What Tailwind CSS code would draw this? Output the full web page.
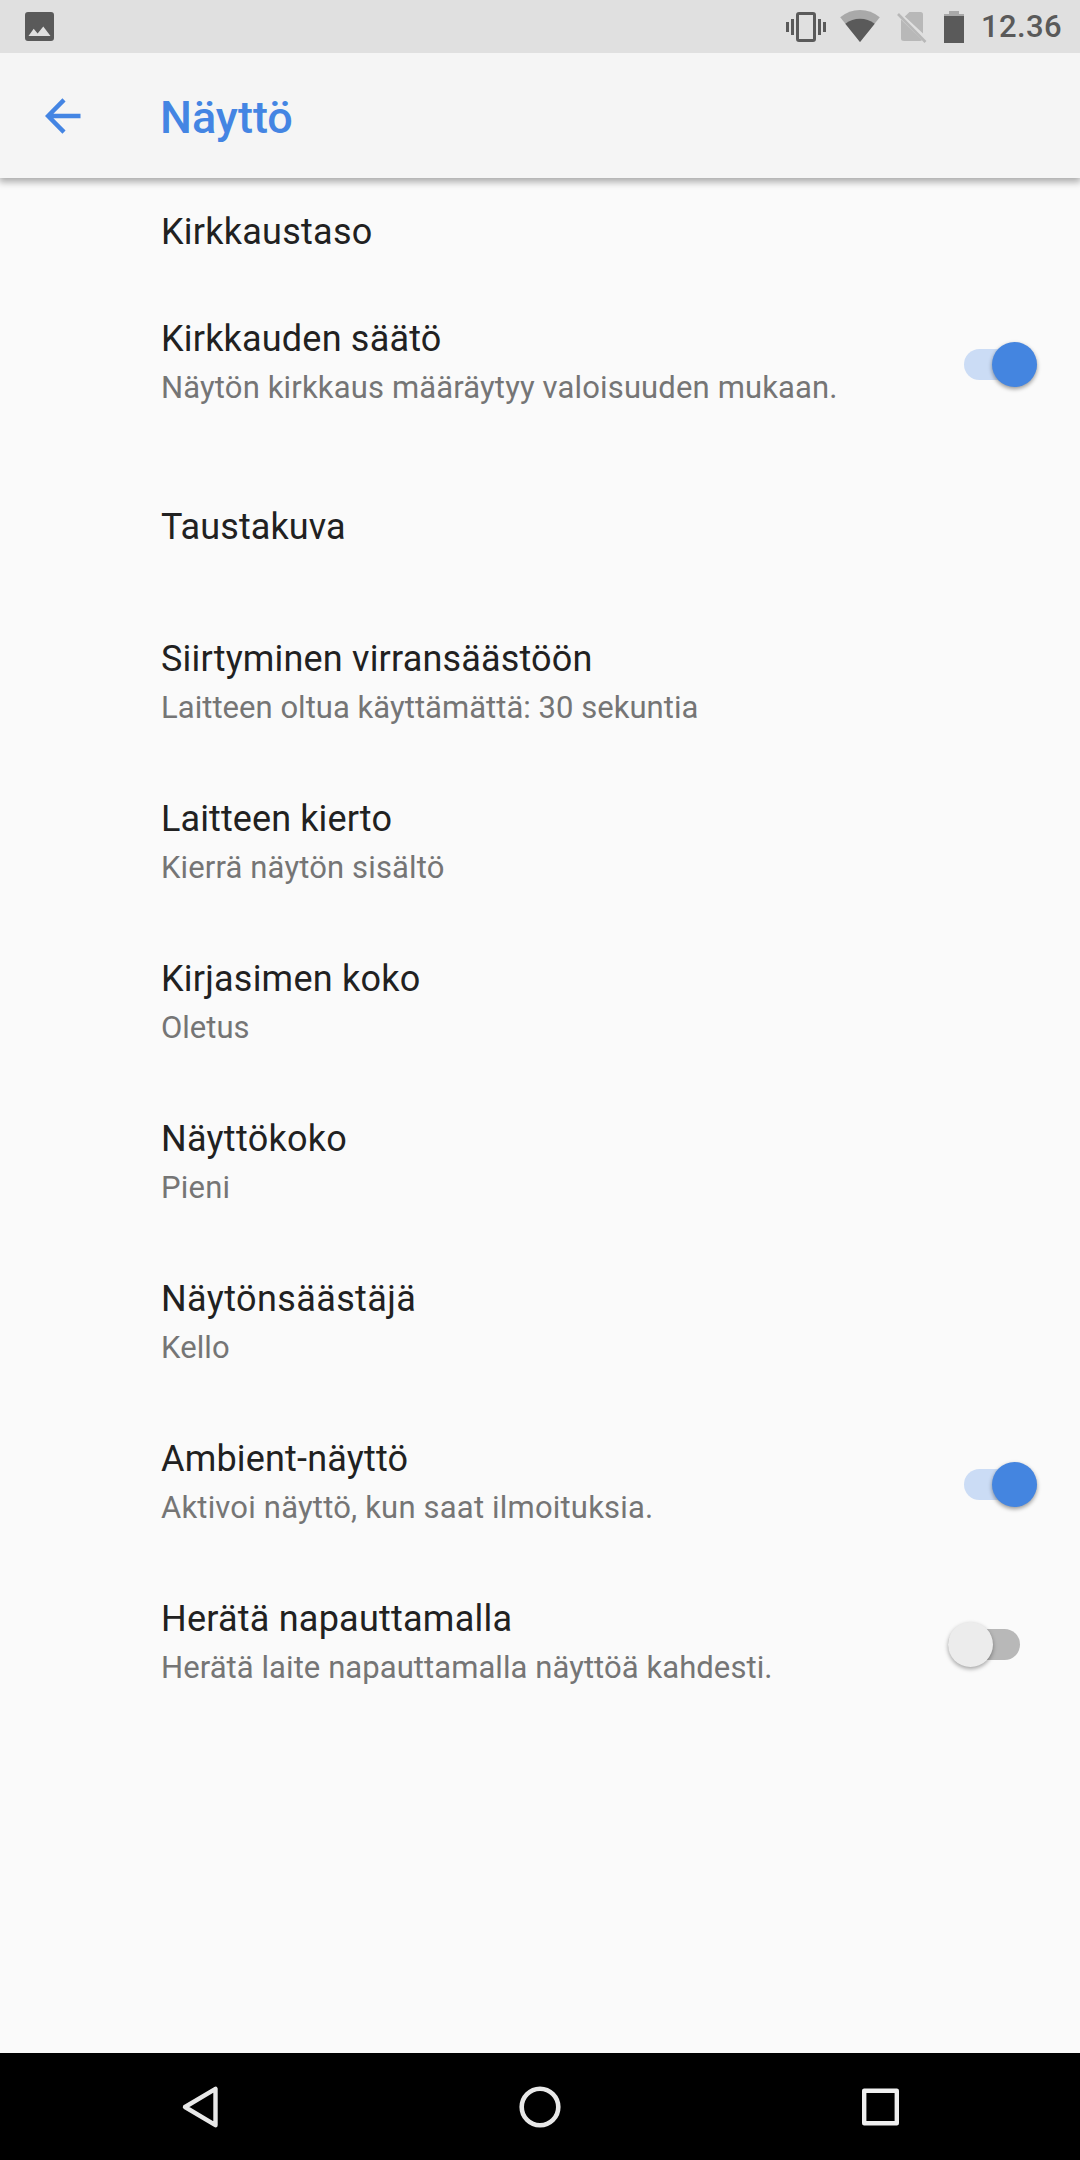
<!DOCTYPE html>
<html lang="fi">
<head>
    <meta charset="UTF-8">
    <meta name="viewport" content="width=device-width, initial-scale=1.0">
    <title>Näyttö</title>
    <script src="https://cdn.jsdelivr.net/npm/@tailwindcss/browser@4"></script>
</head>
<body class="bg-[#fafafa] font-['Roboto',sans-serif]">
    <div class="w-[1080px] h-[2160px] flex flex-col overflow-hidden">
        <!-- Status bar -->
        <div class="relative z-10 h-[53px] shrink-0 bg-[#e0e0e0] flex items-center justify-between pl-[25px] pr-[18px] text-[#5a5a5a]">
            <svg class="w-[29px] h-[29px]" viewBox="0 0 29 29">
                <path fill="currentColor" fill-rule="evenodd" d="M3 0H26Q29 0 29 3V26Q29 29 26 29H3Q0 29 0 26V3Q0 0 3 0ZM3.5 24H25.5L18.3 14.6L12.6 21.5L8.7 16.7Z"/>
            </svg>
            <div class="flex items-center">
                <svg class="w-[40px] h-[32px]" viewBox="786 11 40 32">
                    <path fill="currentColor" d="M786 22h3v10h-3zM791 19h3v16h-3zM818 19h3v16h-3zM823 22h3v10h-3z"/>
                    <rect x="797.5" y="13.5" width="17" height="27" rx="1.5" fill="none" stroke="currentColor" stroke-width="3"/>
                </svg>
                <svg class="w-[40px] h-[34px] ml-[14px]" viewBox="839.5 10 40 34">
                    <path fill="#a9a9a9" d="M859.5 42L839.7 17.3Q848.5 10 859.5 10T879.3 17.3Z"/>
                    <path fill="currentColor" d="M859.5 42L844.8 23.7Q851.5 18.8 859.5 18.8T874.2 23.7Z"/>
                </svg>
                <svg class="w-[30px] h-[34px] ml-[17px]" viewBox="897 10 30 34">
                    <path fill="#b8b8b8" d="M909.5 12H920.5Q923 12 923 14.5V33.5L904.8 16.6ZM901 19.5L922 40Q921.5 41 920 41H904Q901 41 901 38.5Z"/>
                    <path stroke="#b8b8b8" stroke-width="2.6" d="M898 14L925.5 42"/>
                </svg>
                <svg class="w-[20px] h-[34px] ml-[17px]" viewBox="944 9 20 34">
                    <path fill="#a9a9a9" d="M949 10h10v3h5v2.5h-20v-2.5h5z"/>
                    <path fill="currentColor" d="M944 15h20v27h-20z"/>
                </svg>
                <span class="ml-[17px] pt-px text-[31px] leading-[52px] font-medium tracking-[0.4px]">12.36</span>
            </div>
        </div>

        <!-- App bar -->
        <header class="relative h-[125px] shrink-0 bg-[#f5f5f5] flex items-center pl-[45px] text-[#4485e3] shadow-[0_3px_7px_1px_rgba(0,0,0,0.32)]">
            <svg class="w-[36px] h-[36px]" viewBox="0 0 36 36" fill="none" stroke="currentColor" stroke-width="4.4">
                <path d="M35.5 18H4M19 1.9L3.1 18L19 34.1"/>
            </svg>
            <h1 class="ml-[79px] pt-[5px] text-[45px] font-medium">Näyttö</h1>
        </header>

        <!-- Preferences -->
        <main class="flex-1 text-[36px] text-[#212121]">
            <div class="h-[107px] flex items-center pl-[161px] tracking-[0.25px]">Kirkkaustaso</div>
            <div class="h-[160px] flex items-center justify-between pl-[161px] pr-[43px]">
                <div class="-mt-px">
                    <div class="leading-[47px] tracking-[0.2px]">Kirkkauden säätö</div>
                    <div class="text-[31px] leading-[50px] tracking-[0.145px] text-[#757575]">Näytön kirkkaus määräytyy valoisuuden mukaan.</div>
                </div>
                <div class="w-[73px] h-[31px] mb-px rounded-full bg-[#cbdcf5] flex items-center justify-end">
                    <div class="size-[45px] shrink-0 rounded-full bg-[#4485e0] shadow-[0_2px_4px_rgba(0,0,0,0.4)]"></div>
                </div>
            </div>
            <div class="h-[160px] flex items-center pl-[161px] pt-[3px] tracking-[0.1px]">Taustakuva</div>
            <div class="h-[160px] flex items-center pl-[161px]">
                <div class="-mt-px">
                    <div class="leading-[47px] tracking-[0.18px]">Siirtyminen virransäästöön</div>
                    <div class="text-[31px] leading-[50px] tracking-[0.035px] text-[#757575]">Laitteen oltua käyttämättä: 30 sekuntia</div>
                </div>
            </div>
            <div class="h-[160px] flex items-center pl-[161px]">
                <div class="-mt-px">
                    <div class="leading-[47px] tracking-[0.11px]">Laitteen kierto</div>
                    <div class="text-[31px] leading-[50px] tracking-[0.14px] text-[#757575]">Kierrä näytön sisältö</div>
                </div>
            </div>
            <div class="h-[160px] flex items-center pl-[161px]">
                <div class="-mt-px">
                    <div class="leading-[47px] tracking-[0.22px]">Kirjasimen koko</div>
                    <div class="text-[31px] leading-[50px] text-[#757575]">Oletus</div>
                </div>
            </div>
            <div class="h-[160px] flex items-center pl-[161px]">
                <div class="-mt-px">
                    <div class="leading-[47px] tracking-[0.28px]">Näyttökoko</div>
                    <div class="text-[31px] leading-[50px] tracking-[0.2px] text-[#757575]">Pieni</div>
                </div>
            </div>
            <div class="h-[160px] flex items-center pl-[161px]">
                <div class="-mt-px">
                    <div class="leading-[47px] tracking-[0.39px]">Näytönsäästäjä</div>
                    <div class="text-[31px] leading-[50px] tracking-[0.1px] text-[#757575]">Kello</div>
                </div>
            </div>
            <div class="h-[160px] flex items-center justify-between pl-[161px] pr-[43px]">
                <div class="-mt-px">
                    <div class="leading-[47px] tracking-[0.18px]">Ambient-näyttö</div>
                    <div class="text-[31px] leading-[50px] tracking-[0.19px] text-[#757575]">Aktivoi näyttö, kun saat ilmoituksia.</div>
                </div>
                <div class="w-[73px] h-[31px] mb-px rounded-full bg-[#cbdcf5] flex items-center justify-end">
                    <div class="size-[45px] shrink-0 rounded-full bg-[#4485e0] shadow-[0_2px_4px_rgba(0,0,0,0.4)]"></div>
                </div>
            </div>
            <div class="h-[160px] flex items-center justify-between pl-[161px] pr-[60px]">
                <div class="-mt-px">
                    <div class="leading-[47px] tracking-[0.23px]">Herätä napauttamalla</div>
                    <div class="text-[31px] leading-[50px] tracking-[0.07px] text-[#757575]">Herätä laite napauttamalla näyttöä kahdesti.</div>
                </div>
                <div class="w-[72px] h-[31px] mb-px rounded-full bg-[#b8b8b8] flex items-center">
                    <div class="size-[45px] shrink-0 rounded-full bg-[#ececec] shadow-[0_2px_4px_rgba(0,0,0,0.35)]"></div>
                </div>
            </div>
        </main>

        <!-- Navigation bar -->
        <nav class="h-[107px] shrink-0 bg-black flex items-center justify-between pl-[175px] pr-[176px]">
            <svg class="w-[48px] h-[48px]" viewBox="0 0 48 48" fill="none" stroke="#e8e8e8" stroke-width="4.4" stroke-linejoin="round">
                <path d="M40.5 5.8V42.2L10 24Z"/>
            </svg>
            <svg class="w-[48px] h-[48px]" viewBox="0 0 48 48" fill="none" stroke="#e8e8e8" stroke-width="4.6">
                <circle cx="24" cy="24" r="18.3"/>
            </svg>
            <svg class="w-[48px] h-[48px]" viewBox="0 0 48 48" fill="none" stroke="#f0f0f0" stroke-width="4.4" stroke-linejoin="round">
                <path d="M8.2 7.7H40.8V40.3H8.2Z"/>
            </svg>
        </nav>
    </div>
</body>
</html>
